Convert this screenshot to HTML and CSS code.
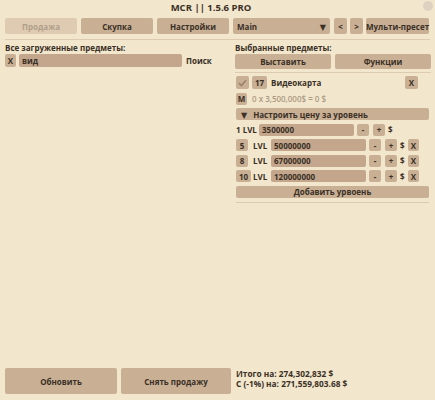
FILE: index.html
```html
<!DOCTYPE html>
<html>
<head>
<meta charset="utf-8">
<link rel="stylesheet" href="styles.css">
</head>
<body>
<div class="window">
  <div class="titlebar">
    <span class="title">MCR || 1.5.6 PRO</span>
    <span class="close"></span>
  </div>
  <div class="tabs">
    <div class="tabgroup">
      <div class="btn disabled">Продажа</div>
      <div class="btn">Скупка</div>
      <div class="btn">Настройки</div>
    </div>
    <div class="presets">
      <div class="select"><span>Main</span><span class="arrow">▼</span></div>
      <div class="btn small">&lt;</div>
      <div class="btn small">&gt;</div>
      <div class="btn multi">Мульти-пресет</div>
    </div>
  </div>
  <div class="sep full"></div>
  <div class="main">
    <div class="lcol">
      <div class="label">Все загруженные предметы:</div>
      <div class="search">
        <div class="box x">X</div>
        <div class="input wide">вид</div>
        <span class="txt">Поиск</span>
      </div>
    </div>
    <div class="rcol">
      <div class="label">Выбранные предметы:</div>
      <div class="actions">
        <div class="btn">Выставить</div>
        <div class="btn">Функции</div>
      </div>
      <div class="sep"></div>
      <div class="items">
        <div class="row">
          <div class="box check">
            <svg width="9" height="8" viewBox="0 0 9 8"><path d="M1 4.2 L3.4 6.5 L8 1.2" fill="none" stroke="#9a826c" stroke-width="1.6"/></svg>
          </div>
          <div class="box count">17</div>
          <span class="txt name">Видеокарта</span>
          <div class="box x right">X</div>
        </div>
        <div class="row">
          <div class="box m">M</div>
          <span class="muted">0 x 3,500,000$ = 0 $</span>
        </div>
        <div class="bar"><span class="arrow">▼</span><span>Настроить цену за уровень</span></div>
        <div class="row">
          <span class="txt lvl1">1 LVL</span>
          <div class="input price1">3500000</div>
          <div class="box pm minus">-</div>
          <div class="box pm plus">+</div>
          <span class="txt dollar">$</span>
        </div>
        <div class="row">
          <div class="lvlcell"><div class="box num">5</div></div>
          <span class="txt lvl">LVL</span>
          <div class="input price">50000000</div>
          <div class="box pm minus">-</div>
          <div class="box pm plus">+</div>
          <span class="txt dollar">$</span>
          <div class="box x del">X</div>
        </div>
        <div class="row">
          <div class="lvlcell"><div class="box num">8</div></div>
          <span class="txt lvl">LVL</span>
          <div class="input price">67000000</div>
          <div class="box pm minus">-</div>
          <div class="box pm plus">+</div>
          <span class="txt dollar">$</span>
          <div class="box x del">X</div>
        </div>
        <div class="row">
          <div class="lvlcell"><div class="box num">10</div></div>
          <span class="txt lvl">LVL</span>
          <div class="input price">120000000</div>
          <div class="box pm minus">-</div>
          <div class="box pm plus">+</div>
          <span class="txt dollar">$</span>
          <div class="box x del">X</div>
        </div>
        <div class="bar add">Добавить урвоень</div>
        <div class="sep thin"></div>
      </div>
    </div>
  </div>
  <div class="footer">
    <div class="fbtns">
      <div class="btn big b1">Обновить</div>
      <div class="btn big b2">Снять продажу</div>
    </div>
    <div class="totals">
      <div>Итого на: 274,302,832 $</div>
      <div>С (-1%) на: 271,559,803.68 $</div>
    </div>
  </div>
</div>
</body>
</html>
```

FILE: styles.css
```css
* { box-sizing: border-box; }
html, body { margin: 0; padding: 0; }
body {
  background: #f2e6cc;
  font-family: "Open Sans", "DejaVu Sans", sans-serif;
  font-weight: 700;
  font-size: 8px;
  color: #3a3026;
}
.window {
  width: 435px;
  height: 400px;
  display: flex;
  flex-direction: column;
  background: #f2e6cc;
}
.titlebar {
  height: 18px;
  position: relative;
  display: flex;
  justify-content: center;
  align-items: center;
  padding-right: 13px;
}
.title { font-size: 9.5px; line-height: 11px; margin-top: -4px; }
.close {
  position: absolute;
  right: 2px;
  top: 1px;
  width: 10px;
  height: 10px;
  border-radius: 50%;
  background: #ddd2c1;
}
.btn {
  background: #c9af94;
  border-radius: 2px;
  display: flex;
  align-items: center;
  justify-content: center;
  white-space: nowrap;
}
.btn.disabled { background: #dfcbb1; color: #b09f8b; }
.tabs {
  height: 16px;
  display: flex;
  padding-left: 5px;
  gap: 4px;
}
.tabgroup { display: flex; gap: 4px; width: 224px; }
.tabgroup .btn { flex: 1; }
.presets { display: flex; gap: 3px; }
.select {
  width: 97px;
  background: #c9af94;
  border-radius: 2px;
  display: flex;
  align-items: center;
  justify-content: space-between;
  padding: 0 4px 0 4px;
  margin-right: 1px;
}
.select .arrow { font-size: 8px; }
.btn.small { width: 13px; }
.btn.multi { width: 63px; }
.sep { height: 1px; background: #dccbb0; }
.sep.full { margin: 5px 5px 0 5px; }
.main {
  flex: 1;
  display: flex;
  gap: 6px;
  padding-left: 5px;
}
.lcol { width: 224px; display: flex; flex-direction: column; }
.rcol { width: 196px; display: flex; flex-direction: column; }
.label { height: 11px; line-height: 11px; margin-top: 2px; }
.search {
  margin-top: 1px;
  height: 13px;
  display: flex;
  align-items: center;
  gap: 3px;
}
.box {
  background: #c9af94;
  border-radius: 2px;
  display: flex;
  align-items: center;
  justify-content: center;
  height: 100%;
  white-space: nowrap;
}
.box.x { width: 11px; }
.input {
  background: #c3a68b;
  border-radius: 2px;
  height: 100%;
  display: flex;
  align-items: center;
  padding-left: 3px;
}
.input.wide { width: 163px; }
.txt { margin-left: 1px; }
.actions {
  margin-top: 1px;
  height: 15px;
  display: flex;
  gap: 4px;
}
.actions .btn { flex: 1; }
.rcol > .sep { margin-top: 3px; }
.items {
  display: flex;
  flex-direction: column;
  gap: 3.5px;
  padding: 3px 2px 0 1px;
}
.row {
  height: 12px;
  display: flex;
  align-items: center;
}
.row:first-child { height: 13px; }
.box.check { width: 13px; }
.box.count { width: 15px; margin-left: 3px; }
.name { margin-left: 4px; }
.box.right { margin-left: auto; margin-right: 11px; width: 13px; }
.box.m { width: 11px; }
.muted { color: #ab9a84; font-weight: 600; margin-left: 5px; }
.bar {
  height: 12px;
  background: #c9af94;
  border-radius: 2px;
  display: flex;
  align-items: center;
  padding-left: 5px;
}
.bar .arrow { margin-right: 6px; font-size: 8px; }
.lvl1 { margin-left: 0; width: 23px; }
.input.price1 { width: 95px; }
.box.pm { width: 12px; }
.box.minus { margin-left: 3px; }
.box.plus { margin-left: 4px; }
.dollar { margin-left: 3px; width: 6px; }
.lvlcell { width: 16px; height: 100%; display: flex; }
.box.num { padding: 0 3px; min-width: 12px; }
.lvl { width: 18px; margin-left: 1px; }
.input.price { width: 95px; }
.box.del { margin-left: 2px; width: 11px; }
.bar.add { justify-content: center; padding-left: 0; }
.sep.thin { margin-top: 0.5px; }
.footer {
  height: 32px;
  display: flex;
  padding-left: 5px;
  gap: 5px;
}
.fbtns { display: flex; gap: 4px; width: 226px; height: 26px; }
.btn.b1 { width: 112px; }
.btn.b2 { width: 110px; }
.totals {
  display: flex;
  flex-direction: column;
  line-height: 9.5px;
  margin-top: 1px;
  font-size: 8.3px;
}
```
